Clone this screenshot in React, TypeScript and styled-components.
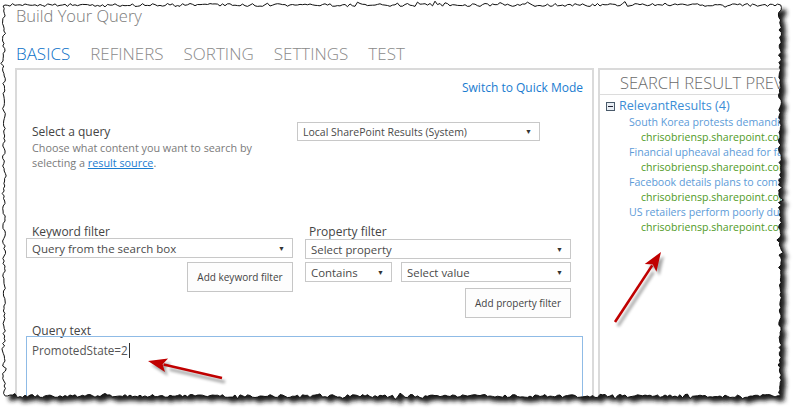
import React from 'react';
import styled, { createGlobalStyle } from 'styled-components';

const GlobalStyle = createGlobalStyle`
  html, body { margin: 0; padding: 0; background: #fff; }
  body { font-family: "Open Sans", "Noto Sans", sans-serif; }
  #root { width: 800px; height: 417px; }
`;

const BLUE = '#1a7cd0';

const Frame = styled.div`
  position: relative;
  width: 800px;
  height: 417px;
  overflow: hidden;
  background: #fff;
`;

const Layer = styled.svg<{ $z: number }>`
  position: absolute;
  left: 0;
  top: 0;
  width: 800px;
  height: 417px;
  z-index: ${(p) => p.$z};
  pointer-events: none;
`;

const Sheet = styled.div`
  position: relative;
  z-index: 1;
  width: 800px;
  height: 417px;
  box-sizing: border-box;
  background: #fff;
  display: flex;
  flex-direction: column;
`;

const Title = styled.div`
  padding: 5px 0 0 16px;
  font-size: 16.5px;
  font-weight: 300;
  line-height: 22px;
  color: #7b7b7b;
`;

const Tabs = styled.div`
  display: flex;
  gap: 20px;
  margin-top: 16px;
  padding-left: 16px;
`;

const Tab = styled.div<{ $active?: boolean }>`
  font-size: 17px;
  font-weight: 300;
  line-height: 22px;
  color: ${(p) => (p.$active ? '#0a70c8' : '#8a8a8a')};
`;

const Body = styled.div`
  flex: 1;
  display: flex;
  gap: 4px;
  margin-top: 3px;
  padding-left: 15px;
  min-height: 0;
`;

const LeftPanel = styled.div`
  width: 579px;
  flex: none;
  box-sizing: border-box;
  border: 2px solid #dadada;
  border-bottom: none;
  padding: 0 9px;
  display: flex;
  flex-direction: column;
`;

const RightPanel = styled.div`
  width: 260px;
  flex: none;
  box-sizing: border-box;
  border: 2px solid #dadada;
  border-bottom: none;
`;

const QuickLink = styled.div`
  align-self: flex-end;
  margin-top: 10px;
  font-size: 12px;
  line-height: 16px;
  color: ${BLUE};
`;

const QueryRow = styled.div`
  display: flex;
  align-items: flex-start;
  margin-top: 28px;
  gap: 6px;
`;

const QueryInfo = styled.div`
  width: 259px;
  padding-left: 6px;
`;

const Label = styled.div<{ $indent?: number }>`
  font-size: 12px;
  line-height: 16px;
  color: #444;
  padding-left: ${(p) => p.$indent ?? 0}px;
`;

const Desc = styled.div`
  font-size: 10.8px;
  line-height: 15px;
  color: #7a7a7a;
`;

const Link = styled.a`
  color: ${BLUE};
  text-decoration: underline;
`;

const Select = styled.div<{ $w: number; $h?: number; $size?: number }>`
  width: ${(p) => p.$w}px;
  height: ${(p) => p.$h ?? 19}px;
  box-sizing: border-box;
  border: 1px solid #c8c8c8;
  background: #fff;
  display: flex;
  align-items: center;
  justify-content: space-between;
  padding: 0 7px 0 5px;
  font-size: ${(p) => p.$size ?? 11.5}px;
  color: #4a4a4a;
  flex: none;
`;

const QuerySelect = styled(Select)`
  margin-top: -2px;
`;

const Caret = styled.span`
  font-size: 7px;
  color: #333;
`;

const FilterRow = styled.div`
  display: flex;
  gap: 12px;
  margin-top: 54px;
`;

const FilterCol = styled.div<{ $w: number }>`
  width: ${(p) => p.$w}px;
  display: flex;
  flex-direction: column;
`;

const Stack = styled.div<{ $gap: number; $top?: number }>`
  display: flex;
  flex-direction: column;
  gap: ${(p) => p.$gap}px;
  margin-top: ${(p) => p.$top ?? 0}px;
`;

const Inline = styled.div`
  display: flex;
  gap: 9px;
`;

const Button = styled.div<{ $h: number; $top?: number }>`
  align-self: flex-end;
  width: 106px;
  height: ${(p) => p.$h}px;
  margin-top: ${(p) => p.$top ?? 0}px;
  box-sizing: border-box;
  border: 1px solid #c6c6c6;
  background: #fdfdfd;
  display: flex;
  align-items: center;
  justify-content: center;
  font-size: 10px;
  color: #444;
`;

const QueryLabel = styled(Label)`
  margin-top: 5px;
`;

const QueryBox = styled.div`
  flex: 1;
  margin-top: -3px;
  border: 1px solid #8fbbe6;
  border-bottom: none;
  padding: 5px 5px;
  font-size: 11.7px;
  color: #555;
  line-height: 16px;
`;

const Cursor = styled.span`
  display: inline-block;
  width: 1px;
  height: 15px;
  background: #333;
  vertical-align: -3px;
  margin-left: 1px;
`;

const PreviewHeader = styled.div`
  padding: 2px 0 0 20px;
  height: 22px;
  line-height: 22px;
  font-size: 16.5px;
  font-weight: 300;
  color: #6a6a6a;
  border-bottom: 1px solid #dcdcdc;
  white-space: nowrap;
`;

const ResultList = styled.div`
  padding: 2px 0 0 6px;
`;

const GroupRow = styled.div`
  display: flex;
  align-items: center;
  gap: 4px;
  font-size: 12.6px;
  line-height: 18px;
  color: #3b8dd6;
`;

const Toggle = styled.span`
  width: 7px;
  height: 7px;
  border: 1px solid #4a5a6a;
  background: #e8eef4;
  position: relative;
  &::after {
    content: '';
    position: absolute;
    left: 1px;
    right: 1px;
    top: 3px;
    height: 1px;
    background: #223;
  }
`;

const ResultTitle = styled.div`
  padding-left: 23px;
  font-size: 10.6px;
  line-height: 15px;
  color: #5d9bd8;
  white-space: nowrap;
`;

const ResultUrl = styled.div`
  padding-left: 35px;
  font-size: 10.6px;
  line-height: 15px;
  color: #4f9a25;
  white-space: nowrap;
`;

function makeRng(seed: number) {
  let s = seed >>> 0;
  return () => {
    s = (s + 0x6d2b79f5) >>> 0;
    let t = s;
    t = Math.imul(t ^ (t >>> 15), t | 1);
    t ^= t + Math.imul(t ^ (t >>> 7), t | 61);
    return ((t ^ (t >>> 14)) >>> 0) / 4294967296;
  };
}

function tornEdge(): [number, number][] {
  const r = makeRng(11);
  const j = () => (r() - 0.5) * 3 + (r() < 0.12 ? (r() - 0.5) * 5 : 0);
  const pts: [number, number][] = [];
  for (let x = 5; x < 779; x += 2.5) pts.push([x, 5 + j()]);
  for (let y = 5; y < 396; y += 2.5) pts.push([780 + j(), y]);
  for (let x = 780; x > 5; x -= 2.5) pts.push([x, 396 + j()]);
  for (let y = 396; y > 5; y -= 2.5) pts.push([4 + j(), y]);
  return pts;
}

const edge = tornEdge();
const edgePath = 'M' + edge.map((p) => `${p[0].toFixed(1)} ${p[1].toFixed(1)}`).join(' L') + ' Z';
const edgeClip = `polygon(${edge.map((p) => `${p[0].toFixed(1)}px ${p[1].toFixed(1)}px`).join(',')})`;

function Arrow({ from, to }: { from: [number, number]; to: [number, number] }) {
  const dx = to[0] - from[0];
  const dy = to[1] - from[1];
  const len = Math.hypot(dx, dy);
  const ux = dx / len;
  const uy = dy / len;
  const hl = 19;
  const hw = 7;
  const bx = to[0] - ux * hl;
  const by = to[1] - uy * hl;
  const head = `${to[0]},${to[1]} ${bx - uy * hw},${by + ux * hw} ${bx + ux * 4},${by + uy * 4} ${bx + uy * hw},${by - ux * hw}`;
  return (
    <g>
      <g transform="translate(3 4)" opacity="0.35" filter="url(#soft)">
        <line x1={from[0]} y1={from[1]} x2={bx} y2={by} stroke="#000" strokeWidth="3" />
        <polygon points={head} fill="#000" />
      </g>
      <line x1={from[0]} y1={from[1]} x2={bx + ux * 3} y2={by + uy * 3} stroke="#c00000" strokeWidth="2.6" />
      <polygon points={head} fill="#c00000" />
    </g>
  );
}

const results = [
  'South Korea protests demanding',
  'Financial upheaval ahead for families',
  'Facebook details plans to combat',
  'US retailers perform poorly during',
];

export default function App() {
  return (
    <>
      <GlobalStyle />
      <Frame>
        <Layer $z={0} viewBox="0 0 800 417">
          <defs>
            <filter id="shadowBlur" x="-5%" y="-5%" width="110%" height="110%">
              <feGaussianBlur stdDeviation="2.2" />
            </filter>
          </defs>
          <path d={edgePath} transform="translate(5 5)" fill="#1e1e1e" filter="url(#shadowBlur)" />
        </Layer>
        <Sheet style={{ clipPath: edgeClip }}>
          <Title>Build Your Query</Title>
          <Tabs>
            <Tab $active>BASICS</Tab>
            <Tab>REFINERS</Tab>
            <Tab>SORTING</Tab>
            <Tab>SETTINGS</Tab>
            <Tab>TEST</Tab>
          </Tabs>
          <Body>
            <LeftPanel>
              <QuickLink>Switch to Quick Mode</QuickLink>
              <QueryRow>
                <QueryInfo>
                  <Label>Select a query</Label>
                  <Desc>
                    Choose what content you want to search by
                    <br />
                    selecting a <Link>result source</Link>.
                  </Desc>
                </QueryInfo>
                <QuerySelect $w={243} $h={19} $size={10.5}>
                  Local SharePoint Results (System)
                  <Caret>▼</Caret>
                </QuerySelect>
              </QueryRow>
              <FilterRow>
                <FilterCol $w={267}>
                  <Label $indent={6}>Keyword filter</Label>
                  <Stack $gap={4} $top={-2}>
                    <Select $w={267} $h={20}>
                      Query from the search box
                      <Caret>▼</Caret>
                    </Select>
                    <Button $h={30}>Add keyword filter</Button>
                  </Stack>
                </FilterCol>
                <FilterCol $w={266}>
                  <Label $indent={4}>Property filter</Label>
                  <Stack $gap={3} $top={-1}>
                    <Select $w={266} $h={20} $size={11.4}>
                      Select property
                      <Caret>▼</Caret>
                    </Select>
                    <Inline>
                      <Select $w={87} $h={20} $size={11.4}>
                        Contains
                        <Caret>▼</Caret>
                      </Select>
                      <Select $w={170} $h={20} $size={11.4}>
                        Select value
                        <Caret>▼</Caret>
                      </Select>
                    </Inline>
                    <Button $h={30} $top={3}>Add property filter</Button>
                  </Stack>
                </FilterCol>
              </FilterRow>
              <QueryLabel $indent={6}>Query text</QueryLabel>
              <QueryBox>
                PromotedState=2
                <Cursor />
              </QueryBox>
            </LeftPanel>
            <RightPanel>
              <PreviewHeader>SEARCH RESULT PREVIEW</PreviewHeader>
              <ResultList>
                <GroupRow>
                  <Toggle />
                  RelevantResults (4)
                </GroupRow>
                {results.map((t) => (
                  <React.Fragment key={t}>
                    <ResultTitle>{t}</ResultTitle>
                    <ResultUrl>chrisobriensp.sharepoint.com</ResultUrl>
                  </React.Fragment>
                ))}
              </ResultList>
            </RightPanel>
          </Body>
        </Sheet>
        <Layer $z={2} viewBox="0 0 800 417">
          <defs>
            <filter id="soft" x="-20%" y="-20%" width="140%" height="140%">
              <feGaussianBlur stdDeviation="1.5" />
            </filter>
          </defs>
          <path d={edgePath} fill="none" stroke="#111" strokeWidth="1" />
          <Arrow from={[222, 378]} to={[148, 361]} />
          <Arrow from={[615, 322]} to={[661, 252]} />
        </Layer>
      </Frame>
    </>
  );
}
